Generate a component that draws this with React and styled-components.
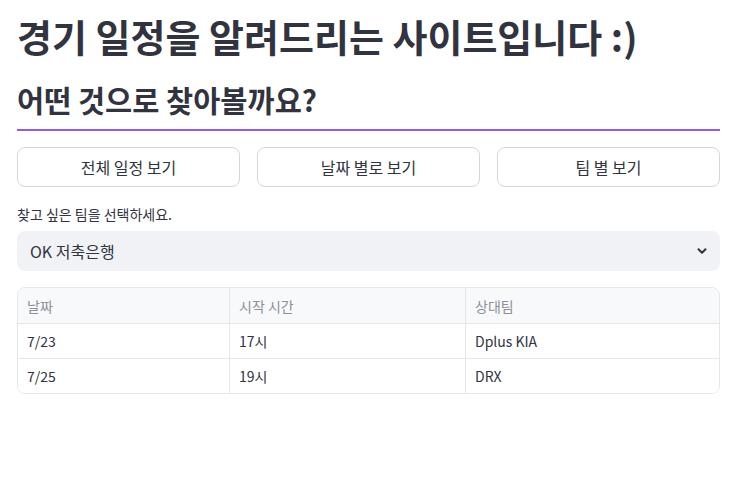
import React from "react";
import styled, { createGlobalStyle } from "styled-components";

const Global = createGlobalStyle`
  html, body { margin: 0; padding: 0; background: #ffffff; }
  body { font-family: "Noto Sans CJK KR", "Noto Sans", sans-serif; color: #31333f; }
  * { box-sizing: border-box; }
`;

const Page = styled.div`
  padding: 6px 15px 0 17px;
  display: flex;
  flex-direction: column;
`;

const Title = styled.h1`
  margin: 0;
  font-size: 38px;
  font-weight: 700;
  line-height: 60px;
  letter-spacing: 0;
  color: #31333f;
`;

const Heading = styled.h2`
  margin: 11px 0 0;
  font-size: 29.5px;
  font-weight: 700;
  line-height: 44px;
  letter-spacing: 0;
  color: #31333f;
  padding-bottom: 8px;
  border-bottom: 2px solid #8e5de4;
`;

const ButtonRow = styled.div`
  display: grid;
  grid-template-columns: repeat(3, 1fr);
  gap: 17px;
  margin-top: 16px;
`;

const Button = styled.button`
  height: 40px;
  border: 1px solid #d5d6da;
  border-radius: 8px;
  background: #ffffff;
  font-family: inherit;
  font-size: 16px;
  color: #31333f;
  cursor: pointer;
`;

const Label = styled.div`
  margin-top: 18px;
  font-size: 14px;
  line-height: 18px;
  color: #31333f;
`;

const Select = styled.div`
  margin-top: 8px;
  height: 40px;
  border-radius: 8px;
  background: #f0f2f6;
  display: flex;
  align-items: center;
  justify-content: space-between;
  padding: 0 12px 0 13px;
  font-size: 16px;
`;

const Table = styled.div`
  margin-top: 16px;
  border: 1px solid #e6e7ea;
  border-radius: 8px;
  overflow: hidden;
  display: grid;
  grid-template-columns: 212px 236px 1fr;
`;

const Cell = styled.div`
  height: ${(p) => (p.$head ? 36 : p.$bottom ? 34 : 35)}px;
  display: flex;
  align-items: center;
  padding: 0 9px;
  font-size: 14px;
  color: ${(p) => (p.$head ? "#8d8f99" : "#31333f")};
  background: ${(p) => (p.$head ? "#f8f9fb" : "#ffffff")};
  border-right: ${(p) => (p.$last ? "none" : "1px solid #e6e7ea")};
  border-bottom: ${(p) => (p.$bottom ? "none" : "1px solid #e6e7ea")};
`;

const Chevron = () => (
  <svg width="12" height="12" viewBox="0 0 12 12">
    <path d="M2.5 4.2 L6 7.7 L9.5 4.2" fill="none" stroke="#31333f" strokeWidth="2" strokeLinecap="round" strokeLinejoin="round" />
  </svg>
);

const rows = [
  ["날짜", "시작 시간", "상대팀"],
  ["7/23", "17시", "Dplus KIA"],
  ["7/25", "19시", "DRX"],
];

export default function App() {
  return (
    <>
      <Global />
      <Page>
        <Title>경기 일정을 알려드리는 사이트입니다 :)</Title>
        <Heading>어떤 것으로 찾아볼까요?</Heading>
        <ButtonRow>
          <Button>전체 일정 보기</Button>
          <Button>날짜 별로 보기</Button>
          <Button>팀 별 보기</Button>
        </ButtonRow>
        <Label>찾고 싶은 팀을 선택하세요.</Label>
        <Select>
          <span>OK 저축은행</span>
          <Chevron />
        </Select>
        <Table>
          {rows.map((r, i) =>
            r.map((c, j) => (
              <Cell key={i + "-" + j} $head={i === 0} $last={j === 2} $bottom={i === rows.length - 1}>
                {c}
              </Cell>
            ))
          )}
        </Table>
      </Page>
    </>
  );
}
